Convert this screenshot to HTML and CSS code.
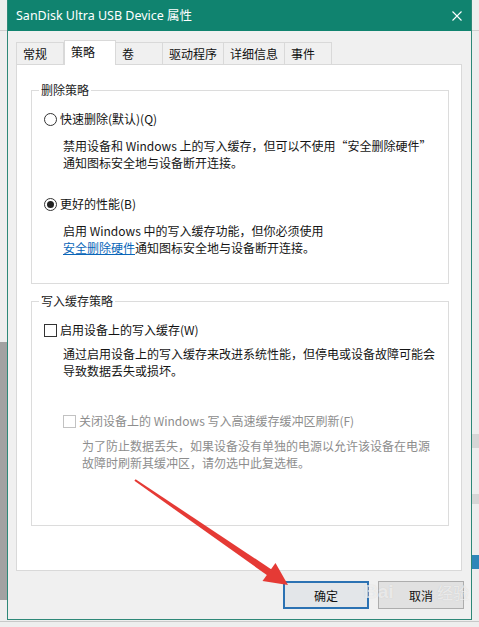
FILE: index.html
```html
<!DOCTYPE html>
<html lang="zh-CN">
<head>
<meta charset="utf-8">
<title>SanDisk Ultra USB Device 属性</title>
<link rel="stylesheet" href="styles.css">
</head>
<body>
<div class="desktop">
  <div class="window">
    <div class="titlebar">
      <span class="title">SanDisk Ultra USB Device 属性</span>
      <svg class="close" width="10" height="10" viewBox="0 0 10 10"><path d="M0.5 0.5 L9.5 9.5 M9.5 0.5 L0.5 9.5" stroke="#fff" stroke-width="1.1" fill="none"/></svg>
    </div>
    <div class="body">
      <div class="tabs">
        <div class="tab">常规</div>
        <div class="tab active">策略</div>
        <div class="tab">卷</div>
        <div class="tab">驱动程序</div>
        <div class="tab">详细信息</div>
        <div class="tab">事件</div>
      </div>
      <div class="pane">
        <fieldset class="group group-remove">
          <legend>删除策略</legend>
          <div class="option"><span class="radio"></span><span>快速删除(默认)(Q)</span></div>
          <p class="desc">禁用设备和 Windows 上的写入缓存，但可以不使用“安全删除硬件”<br>通知图标安全地与设备断开连接。</p>
          <div class="option option-second"><span class="radio checked"></span><span>更好的性能(B)</span></div>
          <p class="desc">启用 Windows 中的写入缓存功能，但你必须使用<br><span class="link">安全删除硬件</span>通知图标安全地与设备断开连接。</p>
        </fieldset>
        <fieldset class="group group-cache">
          <legend>写入缓存策略</legend>
          <div class="option"><span class="check"></span><span>启用设备上的写入缓存(W)</span></div>
          <p class="desc desc-tight">通过启用设备上的写入缓存来改进系统性能，但停电或设备故障可能会<br>导致数据丢失或损坏。</p>
          <div class="option option-disabled"><span class="check"></span><span>关闭设备上的 Windows 写入高速缓存缓冲区刷新(F)</span></div>
          <p class="desc desc-disabled">为了防止数据丢失，如果设备没有单独的电源以允许该设备在电源<br>故障时刷新其缓冲区，请勿选中此复选框。</p>
        </fieldset>
      </div>
      <div class="buttons">
        <button class="btn btn-default">确定</button>
        <button class="btn">取消</button>
      </div>
    </div>
  </div>
  <div class="watermark wm-left">Bai</div>
  <div class="watermark wm-right">经验</div>
  <svg class="arrow" width="479" height="627" viewBox="0 0 479 627">
    <polygon points="135.6,479.2 271.5,569.5 267.5,575.5 134.4,480.8" fill="#e53a35"/>
    <polygon points="288,585 262.5,581 275.5,563" fill="#e53a35"/>
  </svg>
</div>
</body>
</html>
```
FILE: styles.css
```css
html, body {
  margin: 0;
  padding: 0;
}
body {
  width: 479px;
  height: 627px;
  overflow: hidden;
  font-family: "Noto Sans", "Noto Sans CJK SC", sans-serif;
  font-size: 12px;
  color: #111;
}
.desktop {
  position: relative;
  width: 479px;
  height: 627px;
  background:
    linear-gradient(#a2a2a2, #a2a2a2) 0 342px / 7px 258px no-repeat,
    linear-gradient(#cfcfcf, #cfcfcf) 0 30px / 7px 1px no-repeat,
    linear-gradient(#d0d0d0, #d0d0d0) 472px 30px / 7px 1px no-repeat,
    linear-gradient(#d6d6d6, #d6d6d6) 472px 434px / 7px 14px no-repeat,
    linear-gradient(#d6d6d6, #d6d6d6) 472px 494px / 7px 10px no-repeat,
    linear-gradient(#2f86b8, #2f86b8) 472px 555px / 7px 14px no-repeat,
    linear-gradient(#c8c8c8, #c8c8c8) 0 621px / 479px 1px no-repeat,
    #eeeeee;
}
.window {
  position: absolute;
  left: 7px;
  top: 0;
  width: 465px;
  box-sizing: border-box;
  border: 1px solid #2e8878;
  border-top: 0;
  background: #f0f0f0;
  display: flex;
  flex-direction: column;
}
.titlebar {
  height: 31px;
  background: #10836f;
  color: #fff;
  display: flex;
  align-items: center;
  justify-content: space-between;
  padding: 0 9px 0 8px;
}
.title {
  font-family: "Noto Sans", "Noto Sans CJK SC", sans-serif;
  font-size: 12.5px;
  line-height: 16px;
}
.close {
  display: block;
}
.body {
  display: flex;
  flex-direction: column;
  padding: 9px 9px 10px 8px;
}
.tabs {
  display: flex;
  height: 24px;
  align-items: flex-end;
  position: relative;
  z-index: 1;
}
.tab {
  box-sizing: border-box;
  min-width: 48px;
  height: 22px;
  padding: 0 6px;
  margin-right: -1px;
  border: 1px solid #d9d9d9;
  border-bottom: 0;
  background: #f0f0f0;
  font-family: "Noto Sans CJK SC", sans-serif;
  line-height: 21px;
  color: #111;
}
.tab.active {
  height: 25px;
  margin: 0 -1px -1px 1px;
  min-width: 52px;
  background: #fff;
  line-height: 22px;
  padding-left: 6px;
  position: relative;
  z-index: 2;
}
.pane {
  background: #fff;
  border: 1px solid #d9d9d9;
  padding: 17px 0 44px 0;
  display: flex;
  flex-direction: column;
}
.group {
  margin: 0 12px 0 14px;
  padding: 0 0 27px 0;
  border: 1px solid #dcdcdc;
  min-width: 0;
}
.group-cache {
  margin-top: 9px;
  padding-bottom: 54px;
}
legend {
  padding: 0 2px;
  margin-left: 7px;
  line-height: 16px;
  font-family: "Noto Sans CJK SC", sans-serif;
  color: #222;
}
.option {
  display: flex;
  align-items: center;
  gap: 3px;
  margin-top: 13px;
  padding-left: 12px;
  line-height: 16px;
  height: 16px;
  font-family: "Noto Sans CJK SC", sans-serif;
}
.option-second {
  margin-top: 25px;
}
.option-disabled {
  margin-top: 34px;
  padding-left: 31px;
  color: #8d8d8d;
}
.radio {
  box-sizing: border-box;
  width: 13px;
  height: 13px;
  border: 1px solid #333;
  border-radius: 50%;
  background: #fff;
  display: flex;
  align-items: center;
  justify-content: center;
  flex: none;
}
.radio.checked::after {
  content: "";
  width: 7px;
  height: 7px;
  border-radius: 50%;
  background: #222;
}
.check {
  box-sizing: border-box;
  width: 13px;
  height: 13px;
  border: 1px solid #333;
  background: #fff;
  flex: none;
}
.option-disabled .check {
  border-color: #c2c2c2;
}
.desc {
  margin: 10px 0 0 31px;
  line-height: 17px;
  font-family: "Noto Sans CJK SC", sans-serif;
  color: #151515;
}
.desc-tight {
  margin-top: 7px;
}
.desc-disabled {
  margin: 8px 0 0 50px;
  color: #8d8d8d;
}
.link {
  color: #0a66b8;
  text-decoration: underline;
}
.buttons {
  display: flex;
  justify-content: flex-end;
  gap: 9px;
  margin: 10px -2px 0 0;
}
.btn {
  box-sizing: border-box;
  width: 86px;
  height: 28px;
  margin: 0;
  border: 1px solid #adadad;
  background: #e1e1e1;
  font-family: "Noto Sans CJK SC", sans-serif;
  font-size: 12px;
  color: #111;
  padding: 0;
}
.btn-default {
  border: 2px solid #2b72b3;
  background: #e3e6e9;
}
.watermark {
  position: absolute;
  top: 581px;
  font-family: "Liberation Sans", "Noto Sans CJK SC", sans-serif;
  font-size: 19px;
  line-height: 22px;
  font-weight: bold;
  color: rgba(255, 255, 255, 0.6);
  text-shadow: 0 0 1px rgba(150, 150, 150, 0.35);
  pointer-events: none;
}
.wm-left {
  left: 364px;
}
.wm-right {
  left: 437px;
  font-size: 16px;
  font-weight: normal;
  top: 583px;
}
.arrow {
  position: absolute;
  left: 0;
  top: 0;
  pointer-events: none;
}
```
